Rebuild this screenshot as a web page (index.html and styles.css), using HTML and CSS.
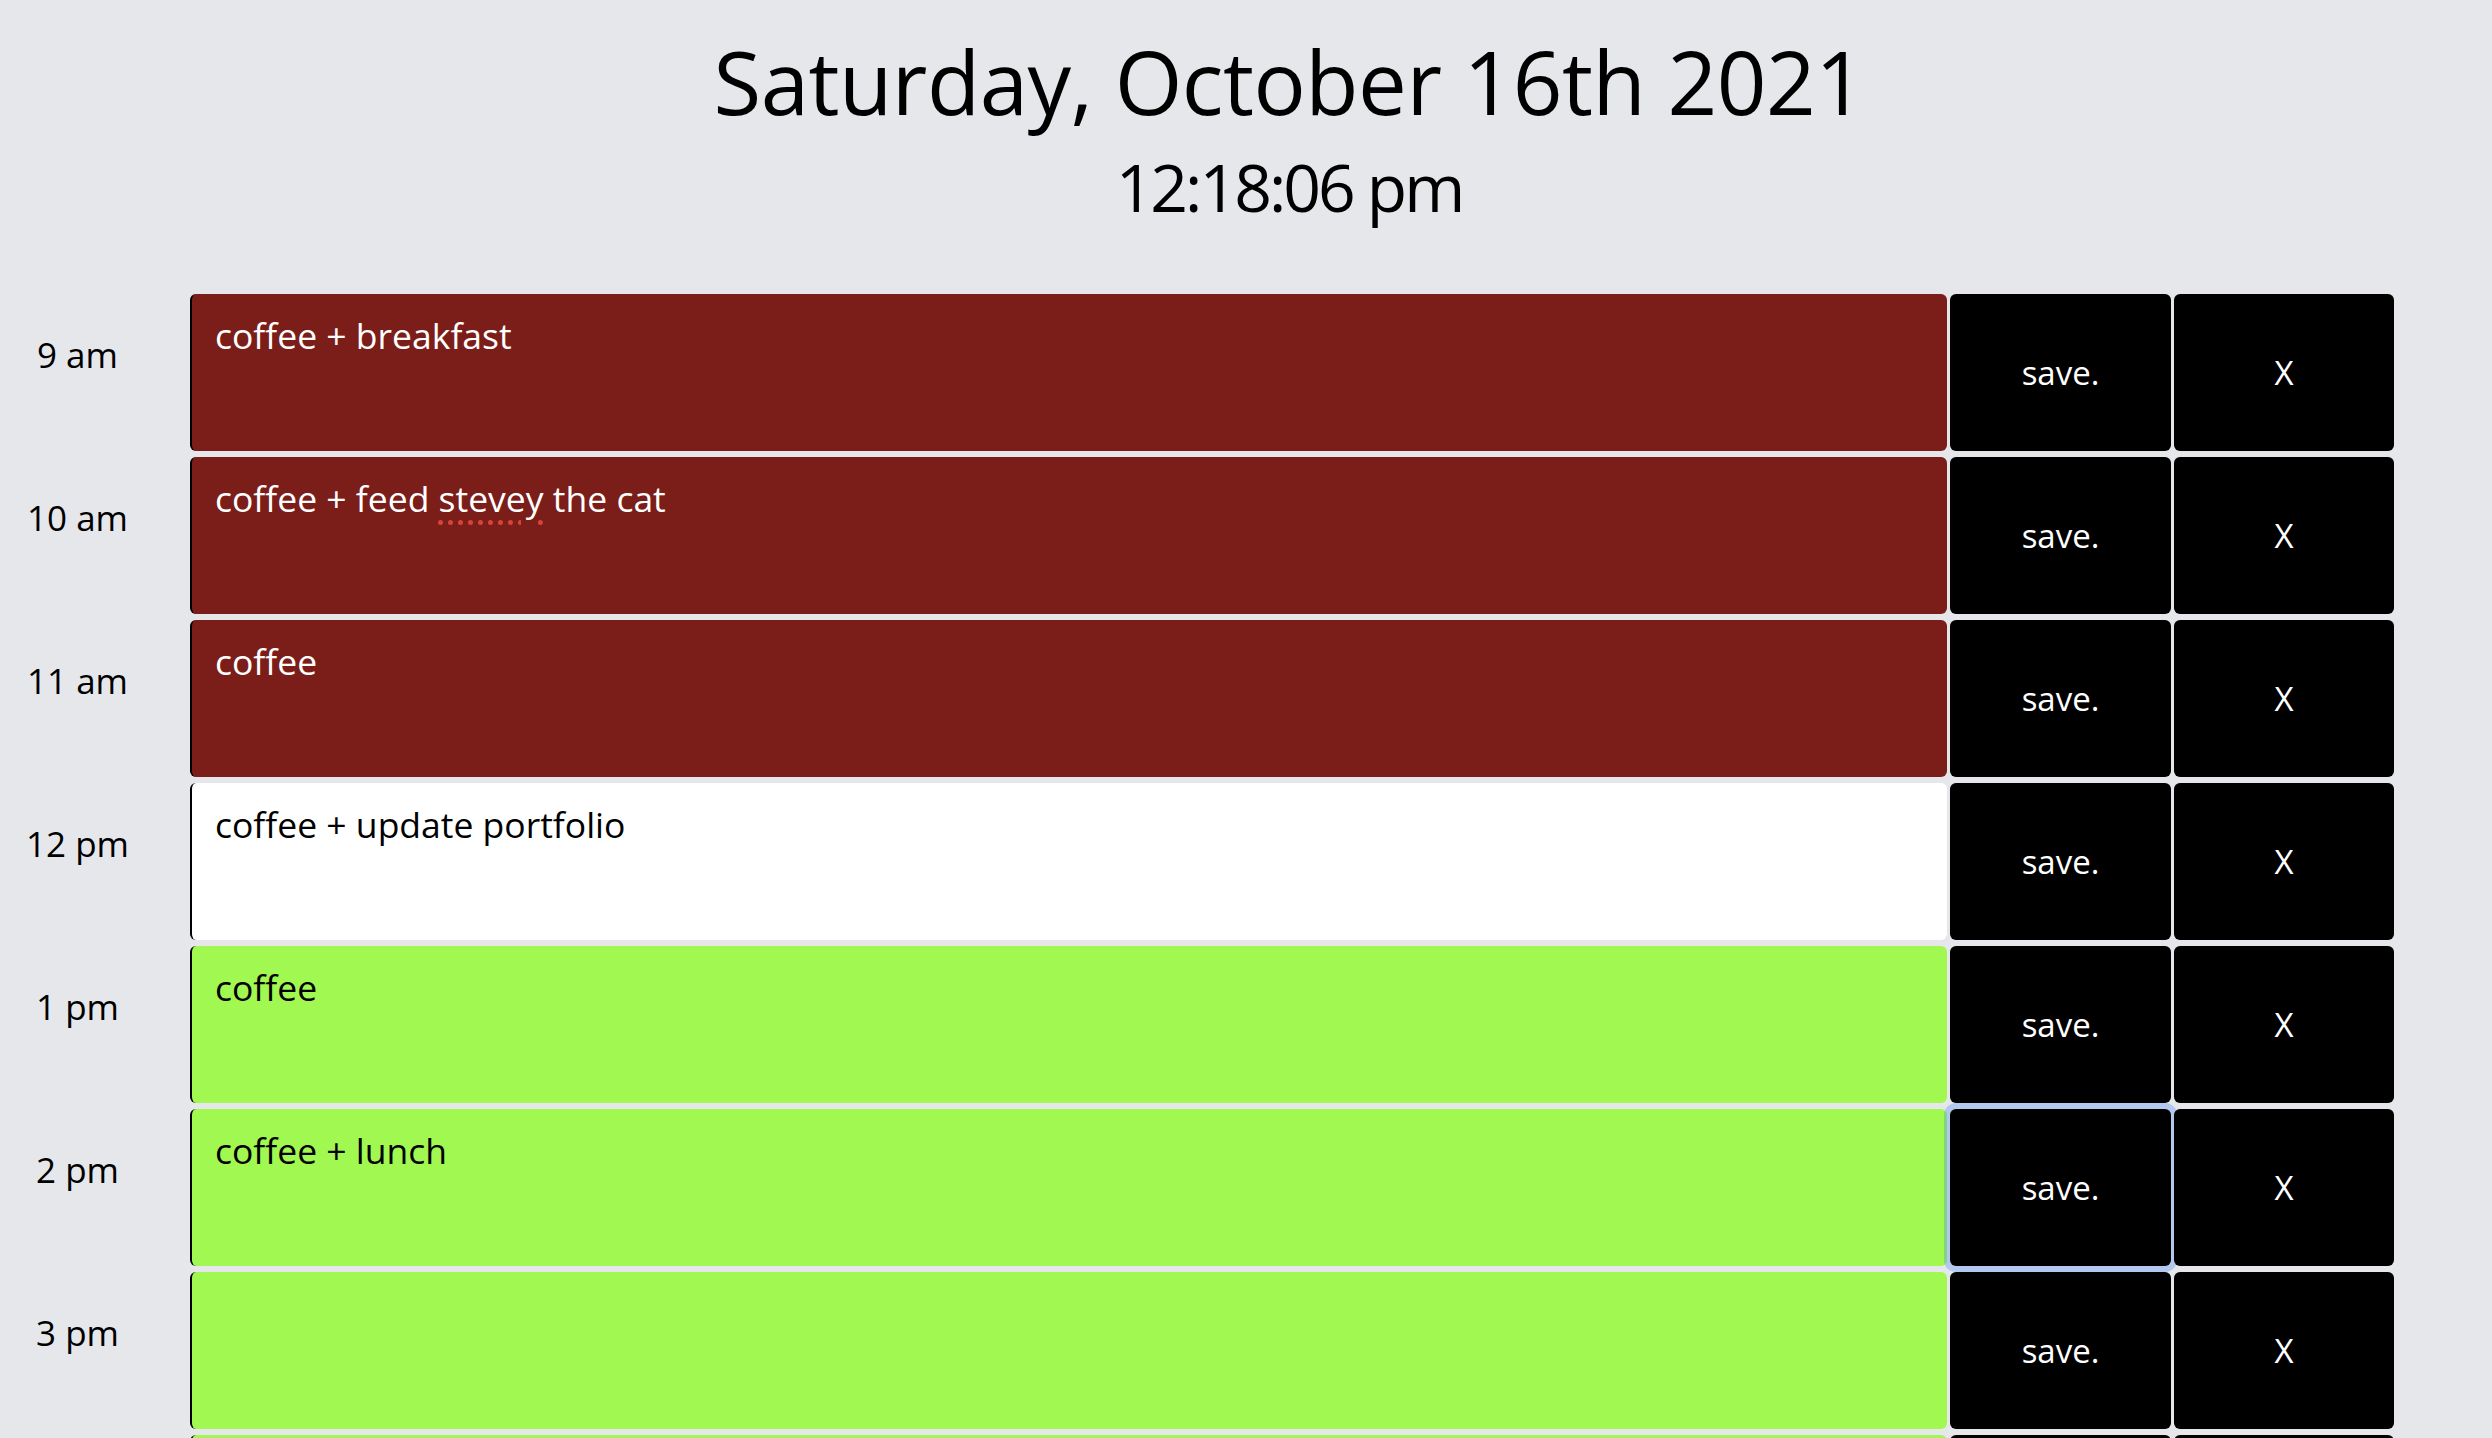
FILE: index.html
```html
<!DOCTYPE html>
<html lang="en">
<head>
<meta charset="utf-8">
<title>Work Day Scheduler</title>
<link rel="stylesheet" href="styles.css">
</head>
<body>
<header class="header">
  <h1 class="date">Saturday, October 16th 2021</h1>
  <p class="clock">12:18:06 pm</p>
</header>
<main class="schedule">
  <div class="hour-row">
    <div class="hour">9 am</div>
    <div class="task past">coffee + breakfast</div>
    <button class="btn save">save.</button>
    <button class="btn clear">X</button>
  </div>
  <div class="hour-row">
    <div class="hour">10 am</div>
    <div class="task past">coffee + feed <span class="misspelled">stevey</span> the cat</div>
    <button class="btn save">save.</button>
    <button class="btn clear">X</button>
  </div>
  <div class="hour-row">
    <div class="hour">11 am</div>
    <div class="task past">coffee</div>
    <button class="btn save">save.</button>
    <button class="btn clear">X</button>
  </div>
  <div class="hour-row">
    <div class="hour">12 pm</div>
    <div class="task present">coffee + update portfolio</div>
    <button class="btn save">save.</button>
    <button class="btn clear">X</button>
  </div>
  <div class="hour-row">
    <div class="hour">1 pm</div>
    <div class="task future">coffee</div>
    <button class="btn save">save.</button>
    <button class="btn clear">X</button>
  </div>
  <div class="hour-row">
    <div class="hour">2 pm</div>
    <div class="task future">coffee + lunch</div>
    <button class="btn save focused">save.</button>
    <button class="btn clear">X</button>
  </div>
  <div class="hour-row">
    <div class="hour">3 pm</div>
    <div class="task future"></div>
    <button class="btn save">save.</button>
    <button class="btn clear">X</button>
  </div>
  <div class="hour-row">
    <div class="hour">4 pm</div>
    <div class="task future"></div>
    <button class="btn save">save.</button>
    <button class="btn clear">X</button>
  </div>
  <div class="hour-row">
    <div class="hour">5 pm</div>
    <div class="task future"></div>
    <button class="btn save">save.</button>
    <button class="btn clear">X</button>
  </div>
</main>
</body>
</html>
```
FILE: styles.css
```css
html, body {
  margin: 0;
  padding: 0;
}

body {
  background: #e5e7eb;
  color: #000;
  font-family: "Open Sans", "Noto Sans", sans-serif;
}

.header {
  padding-top: 21px;
  padding-left: 86px;
  text-align: center;
  height: 294px;
  box-sizing: border-box;
}

.date {
  margin: 0;
  font-size: 87px;
  font-weight: 400;
  line-height: 120px;
  letter-spacing: -0.5px;
}

.clock {
  margin: 0;
  font-size: 66px;
  line-height: 90px;
  letter-spacing: -3px;
}

.schedule {
  display: flex;
  flex-direction: column;
  gap: 6px;
  padding-right: 98px;
}

.hour-row {
  display: grid;
  grid-template-columns: 187px 1fr 221px 220px;
  column-gap: 3px;
  height: 157px;
}

.hour {
  padding-top: 37px;
  padding-right: 32px;
  text-align: center;
  font-size: 35px;
}

.task {
  box-sizing: border-box;
  border-left: 2px solid #000;
  border-radius: 6px;
  padding: 17px 23px;
  font-size: 35.5px;
  white-space: pre-wrap;
}

.past {
  background: #7b1d18;
  color: #fff;
}

.present {
  background: #fff;
  color: #000;
}

.future {
  background: #a0f850;
  color: #000;
}

.misspelled {
  text-decoration: underline dotted #d8433a;
  text-decoration-thickness: 5px;
  text-underline-offset: 8px;
}

.btn {
  display: flex;
  align-items: center;
  justify-content: center;
  margin: 0;
  border: 0;
  border-radius: 6px;
  background: #000;
  color: #fff;
  font-family: inherit;
  font-size: 33px;
  padding: 0;
}

.focused {
  box-shadow: 0 0 0 6px rgba(59, 130, 246, 0.3);
}
```
